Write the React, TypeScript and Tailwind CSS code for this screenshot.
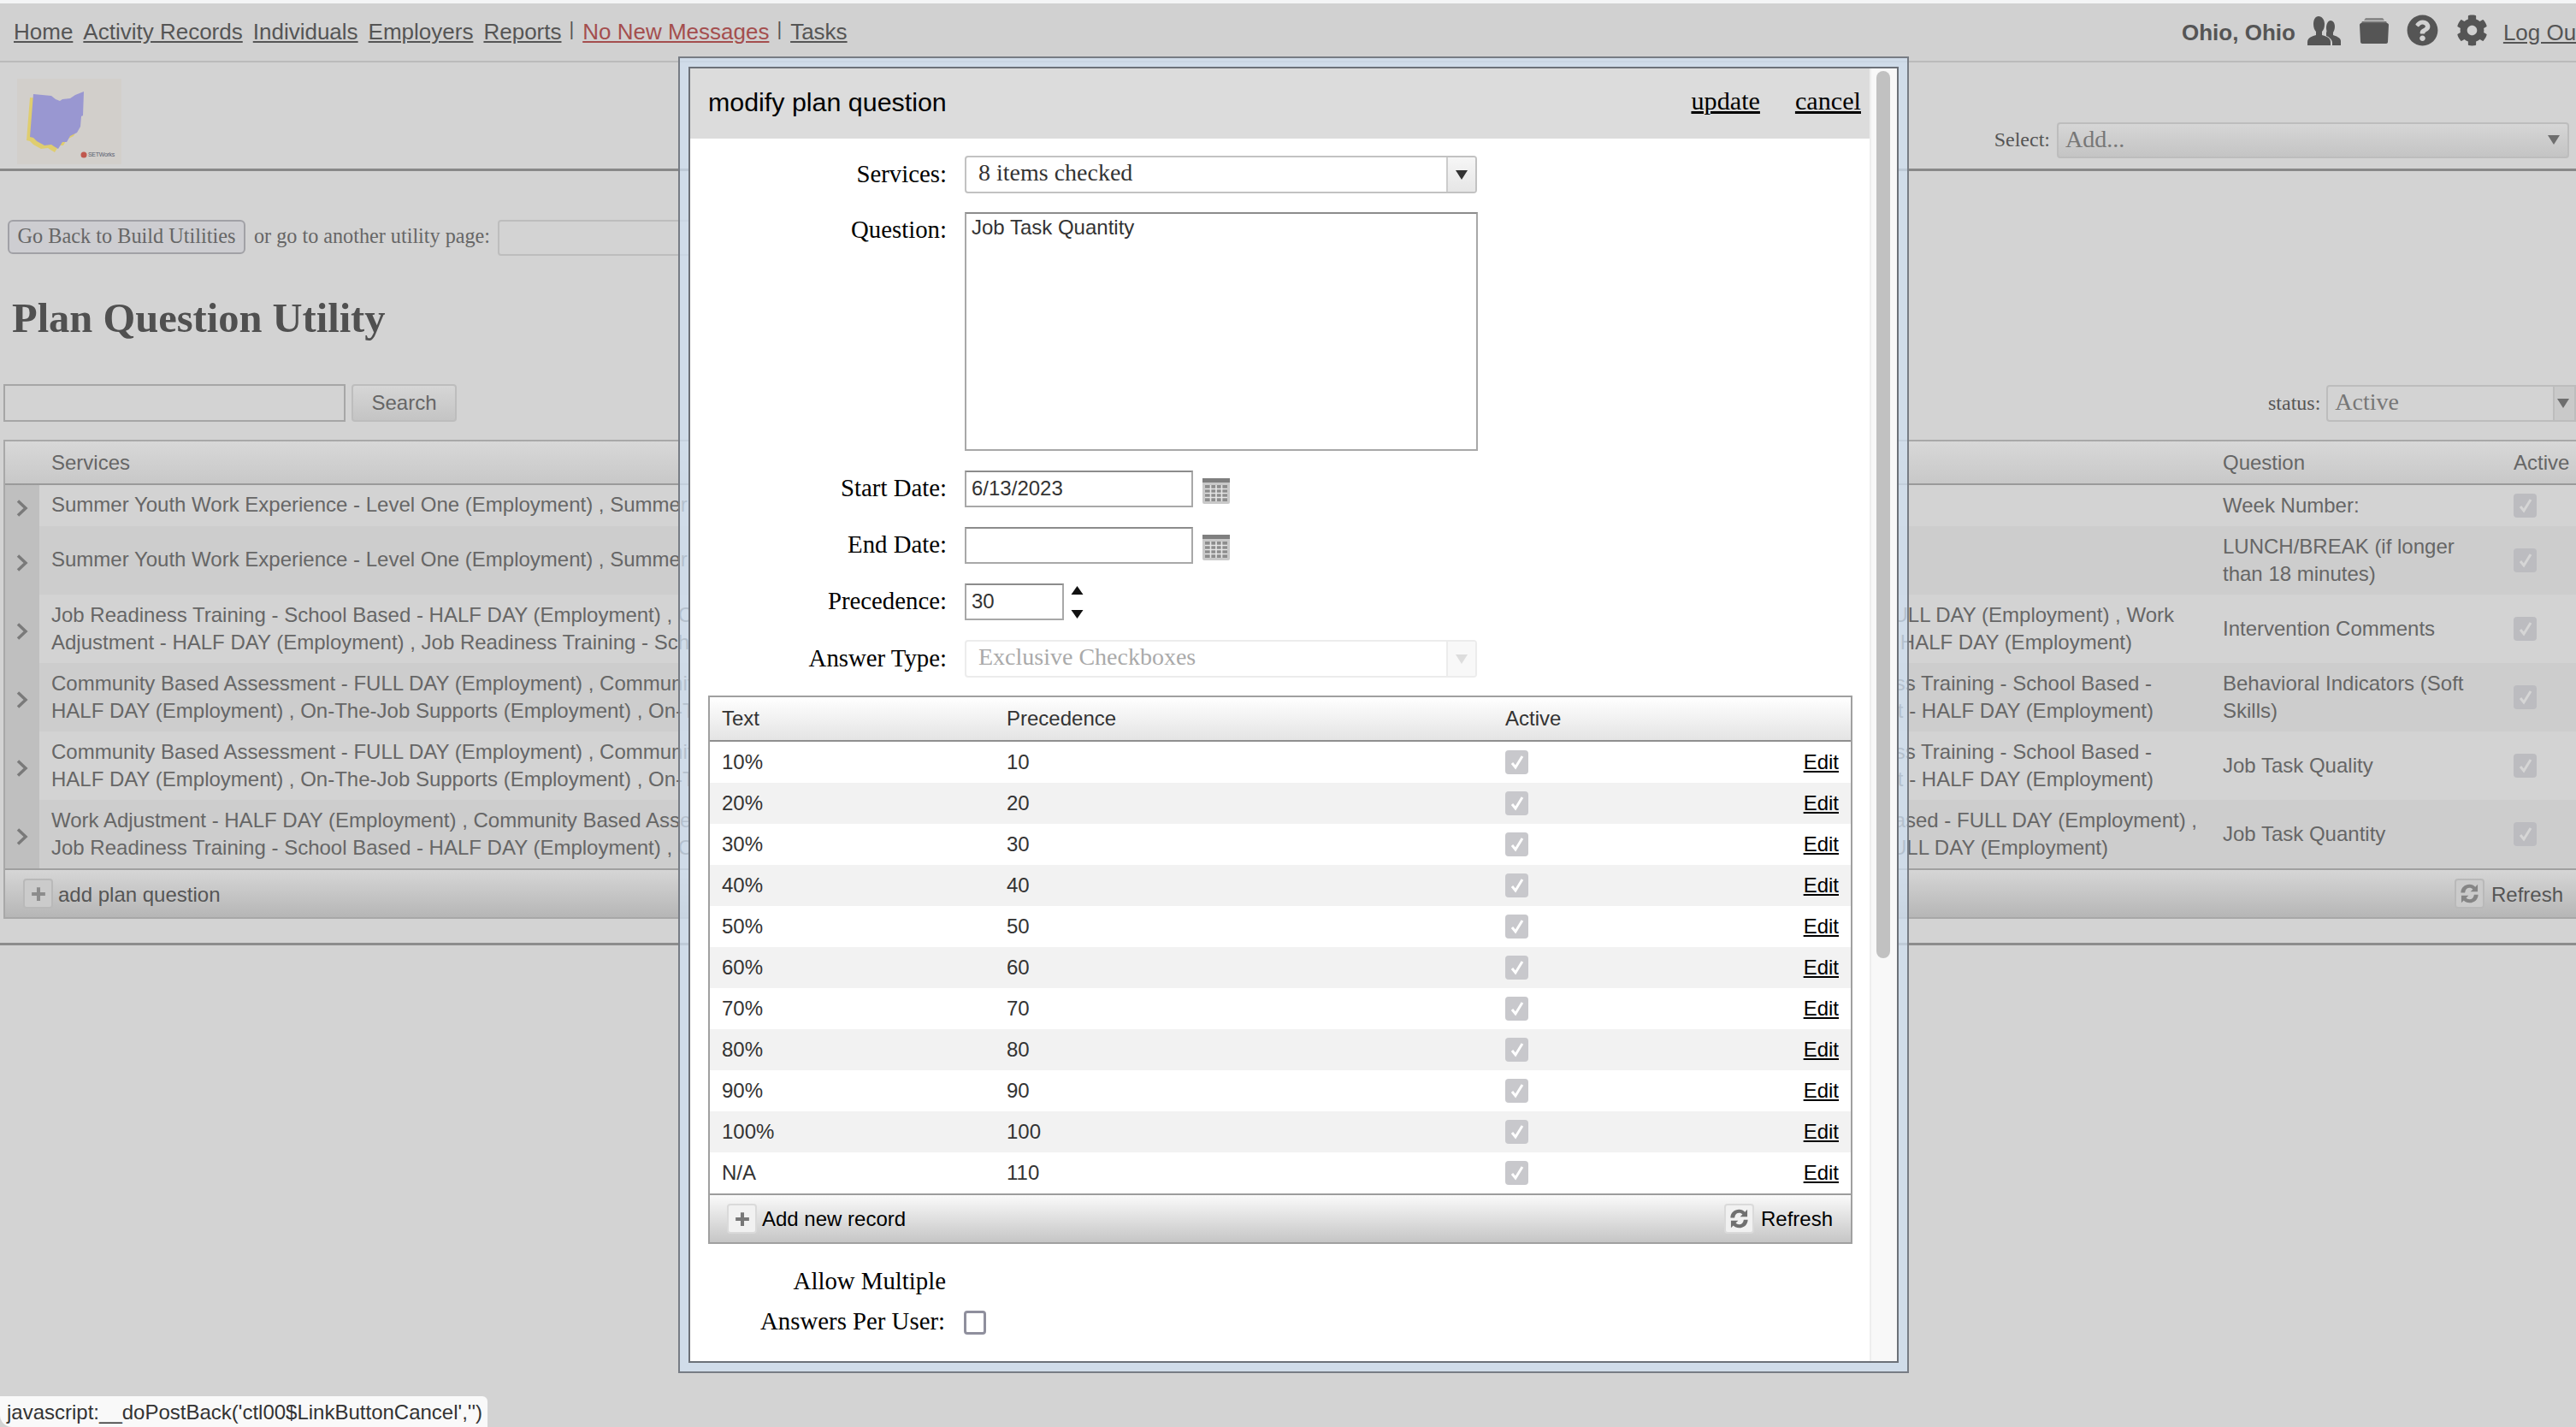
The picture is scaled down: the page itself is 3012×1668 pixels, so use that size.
import React from "react";
import { FaCog, FaQuestionCircle } from "react-icons/fa";

const serif = "font-['Liberation_Serif',serif]";

const rows = [
  {
    left: ["Summer Youth Work Experience - Level One (Employment) , Summer Youth Work Experience"],
    right: [],
    question: ["Week Number:"],
    h: "h-[48px]",
  },
  {
    left: ["Summer Youth Work Experience - Level One (Employment) , Summer Youth Work Experience"],
    right: [],
    question: ["LUNCH/BREAK (if longer", "than 18 minutes)"],
    h: "h-[80px]",
  },
  {
    left: [
      "Job Readiness Training - School Based - HALF DAY (Employment) , Community Based",
      "Adjustment - HALF DAY (Employment) , Job Readiness Training - School Based",
    ],
    right: [
      { t: "FULL DAY (Employment) , Work", pr: "pr-[57px]" },
      { t: "HALF DAY (Employment)", pr: "pr-[106px]" },
    ],
    question: ["Intervention Comments"],
    h: "h-[80px]",
  },
  {
    left: [
      "Community Based Assessment - FULL DAY (Employment) , Community Based",
      "HALF DAY (Employment) , On-The-Job Supports (Employment) , On-The-Job",
    ],
    right: [
      { t: "ess Training - School Based -", pr: "pr-[83px]" },
      { t: "nt - HALF DAY (Employment)", pr: "pr-[81px]" },
    ],
    question: ["Behavioral Indicators (Soft", "Skills)"],
    h: "h-[80px]",
  },
  {
    left: [
      "Community Based Assessment - FULL DAY (Employment) , Community Based",
      "HALF DAY (Employment) , On-The-Job Supports (Employment) , On-The-Job",
    ],
    right: [
      { t: "ess Training - School Based -", pr: "pr-[83px]" },
      { t: "nt - HALF DAY (Employment)", pr: "pr-[81px]" },
    ],
    question: ["Job Task Quality"],
    h: "h-[80px]",
  },
  {
    left: [
      "Work Adjustment - HALF DAY (Employment) , Community Based Assessment",
      "Job Readiness Training - School Based - HALF DAY (Employment) , Community",
    ],
    right: [
      { t: "Based - FULL DAY (Employment) ,", pr: "pr-[30px]" },
      { t: "FULL DAY (Employment)", pr: "pr-[134px]" },
    ],
    question: ["Job Task Quantity"],
    h: "h-[80px]",
  },
];

const answers = [
  ["10%", "10"],
  ["20%", "20"],
  ["30%", "30"],
  ["40%", "40"],
  ["50%", "50"],
  ["60%", "60"],
  ["70%", "70"],
  ["80%", "80"],
  ["90%", "90"],
  ["100%", "100"],
  ["N/A", "110"],
];

const UsersIcon = () => (
  <svg viewBox="0 0 40 36" className="w-[40px] h-[36px] text-[#555]" fill="currentColor">
    <path d="M27 6c3 0 5 3 5 7 0 3-1 5-2 7v3c3 1 9 3 9 7v5H29v-3c0-4-4-7-7-8v-4c1-1 0-3 0-5 0-5 2-9 5-9z" />
    <path d="M13 1c4 0 7 4 7 9 0 4-1 7-3 9v4c4 1 10 3 10 8v4H0v-4c0-5 6-7 10-8v-4c-2-2-3-5-3-9 0-5 2-9 6-9z" />
  </svg>
);

const FolderIcon = () => (
  <svg viewBox="0 0 36 32" className="w-[36px] h-[32px]">
    <path d="M8 1h20l2 3H6z" fill="#8a8a8a" />
    <path d="M4 5h28l2 4H2z" fill="#6e6e6e" />
    <path d="M1 9c0-1 1-2 2-2h30c1 0 2 1 2 2l-1 20c0 1-1 2-2 2H4c-1 0-2-1-2-2z" fill="#555" />
  </svg>
);

const PlusIcon = ({ color }: { color: string }) => (
  <svg viewBox="0 0 16 16" className="w-[18px] h-[18px]" fill={color}>
    <path d="M6.2 1h3.6v5.2H15v3.6H9.8V15H6.2V9.8H1V6.2h5.2z" />
  </svg>
);

const RefreshIcon = ({ color }: { color: string }) => (
  <svg viewBox="0 0 24 24" className="w-[27px] h-[27px]" fill={color}>
    <path d="M3 11C3 6 7 2.500 12 2.500c2.500 0 4.500 1 6 2.500L20.500 2.500V10h-7.500l2.500-2.500C14.500 6.500 13.500 6 12 6 9.500 6 7.800 7.500 7.200 11z" />
    <path d="M21 13c0 5-4 8.500-9 8.500-2.500 0-4.500-1-6-2.500L3.500 21.500V14H11l-2.500 2.500C9.500 17.500 10.500 18 12 18c2.500 0 4.200-1.500 4.800-5z" />
  </svg>
);

const IconButton = ({ light, children }: { light?: boolean; children: React.ReactNode }) => (
  <span
    className={`flex w-[35px] h-[35px] items-center justify-center rounded-[4px] border-2 ${
      light ? "border-[#dadada] bg-[#f1f1f1]" : "border-[#b9b9b9] bg-[#cbcbcb]"
    }`}
  >
    {children}
  </span>
);

const Checkbox = ({ light }: { light?: boolean }) => (
  <span
    className={`flex w-[27px] h-[28px] items-center justify-center rounded-[4px] ${
      light ? "bg-[#c8c8cc]" : "bg-[#bcbcc0]"
    }`}
  >
    <svg viewBox="0 0 20 20" className="w-[20px] h-[20px]" fill="none">
      <path
        d="M4 11l4 5 8-13"
        stroke={light ? "#ffffff" : "#d6d6d6"}
        strokeWidth="3"
      />
    </svg>
  </span>
);

const Caret = ({ color }: { color: string }) => (
  <svg viewBox="0 0 14 12" className="w-[14px] h-[12px]" fill={color}>
    <path d="M0 1h14L7 12z" />
  </svg>
);

const CalendarIcon = () => (
  <svg viewBox="0 0 32 30" className="w-[32px] h-[30px]">
    <rect x="0" y="0" width="32" height="30" rx="2" fill="#c9c9c9" />
    <rect x="0" y="0" width="32" height="5" fill="#7f7f7f" />
    <rect x="3" y="8" width="26" height="19" fill="#8d8d8d" />
    <path d="M3 12.500h26M3 17.500h26M3 22.500h26M9.500 8v19M16 8v19M22.500 8v19" stroke="#e6e6e6" strokeWidth="1.600" />
  </svg>
);

const FormRow = ({ label, mt, children }: { label: string; mt: string; children: React.ReactNode }) => (
  <div className={`flex items-center ${mt}`}>
    <div className={`w-[300px] shrink-0 pb-[3px] text-right text-[28.800px] leading-[40px] text-black ${serif}`}>{label}</div>
    <div className="ml-[21px] flex items-center">{children}</div>
  </div>
);

const App = () => {
  return (
    <div className="relative w-[3012px] h-[1668px] overflow-hidden bg-[#d3d3d3] font-['Liberation_Sans',Arial,sans-serif] text-[#666]">
      <div className="h-[4px] bg-[#f4f5f6]" />

      {/* Top nav */}
      <div className="flex h-[69px] items-start justify-between border-b-2 border-[#bbbbbb] bg-[#d1d1d1] pl-[16px] pt-[18px] text-[26px] leading-[30px] text-[#555]">
        <div className="flex items-start gap-[12px]">
          <span className="underline">Home</span>
          <span className="underline">Activity Records</span>
          <span className="underline">Individuals</span>
          <span className="underline">Employers</span>
          <span className="underline">Reports</span>
          <span className="-mt-[3px] -ml-[3px] text-[22px]">|</span>
          <span className="-ml-[2px] text-[#a44e4e] underline">No New Messages</span>
          <span className="-mt-[3px] -ml-[3px] text-[22px]">|</span>
          <span className="-ml-[2px] underline">Tasks</span>
        </div>
        <div className="-mt-[5px] flex w-[461px] shrink-0 items-center whitespace-nowrap">
          <span className="mt-[5px] font-bold">Ohio, Ohio</span>
          <span className="ml-[14px]"><UsersIcon /></span>
          <span className="ml-[20px]"><FolderIcon /></span>
          <span className="ml-[20px]"><FaQuestionCircle size={37} color="#555" /></span>
          <span className="ml-[21px]"><FaCog size={37} color="#555" /></span>
          <span className="ml-[18px] mt-[5px] underline">Log Out</span>
        </div>
      </div>

      {/* Logo and add select */}
      <div className="flex h-[127px] items-start justify-between border-b-[3px] border-[#888888] pl-[20px] pt-[19px]">
        <div className="relative h-[100px] w-[122px] bg-[#d2cfcb]">
          <svg viewBox="0 0 122 100" className="h-full w-full">
            <path
              d="M15 22l21 2 5 4 5 2 3-2 9-1 6-4 10-4-1 28-2 1-1 12-4 7-8 4-4 7h-5l-5 8-5-3-3-2-8 1-9-5-4-4-4-1z"
              fill="#dfcd6f"
            />
            <path
              d="M19 18l21 2 5 4 5 2 3-2 9-1 6-4 10-4-1 28-2 1-1 12-4 7-8 4-4 7h-5l-5 8-5-3-3-2-8 1-9-5-4-4-4-1z"
              fill="#9997d1"
            />
            <circle cx="78" cy="89" r="3.500" fill="#c0584e" />
          </svg>
          <span className="absolute left-[83px] top-[84px] text-[7px] leading-[10px] tracking-[-0.3px] text-[#5a6070]">SETWorks</span>
        </div>
        <div className={`mr-[8px] mt-[51px] flex items-center ${serif}`}>
          <span className="mr-[8px] pb-[2px] text-[24px] text-[#555]">Select:</span>
          <div className="flex h-[42px] w-[599px] items-center justify-between rounded-[4px] border-2 border-[#bdbdbd] bg-gradient-to-b from-[#d6d6d6] to-[#c4c4c4] pb-[2px] pl-[8px] pr-[9px] text-[28px] text-[#777]">
            <span>Add...</span>
            <Caret color="#6e6e6e" />
          </div>
        </div>
      </div>

      {/* Utility links */}
      <div className={`ml-[9px] mt-[57px] flex h-[42px] items-start ${serif}`}>
        <div className="flex h-[40px] w-[278px] items-center justify-center rounded-[6px] border-2 border-[#a1a1a6] bg-[#cdcdd1] pb-[2px] text-[24.300px] text-[#666]">
          Go Back to Build Utilities
        </div>
        <span className="ml-[10px] mt-[4px] text-[24.200px] leading-[30px] text-[#666]">or go to another utility page:</span>
        <div className="ml-[9px] h-[42px] w-[300px] rounded-[4px] border-2 border-[#bdbdbd]" />
      </div>

      <h1 className={`ml-[14px] mt-[45px] text-[48.500px] font-bold leading-[56px] text-[#505050] ${serif}`}>Plan Question Utility</h1>

      {/* Search and status */}
      <div className="mt-[49px] flex h-[44px] items-center justify-between pl-[4px]">
        <div className="flex items-center">
          <div className="h-[44px] w-[400px] border-2 border-[#a6a6a6]" />
          <div className="ml-[7px] flex h-[44px] w-[123px] items-center justify-center rounded-[4px] border-2 border-[#bdbdbd] bg-gradient-to-b from-[#d6d6d6] to-[#c4c4c4] text-[24px]">
            Search
          </div>
        </div>
        <div className={`flex w-[360px] shrink-0 items-center ${serif}`}>
          <span className="text-[24px] text-[#555]">status:</span>
          <div className="ml-[7px] flex h-[43px] flex-1 overflow-hidden rounded-l-[4px] border-2 border-[#bdbdbd]">
            <span className="w-[263px] pl-[8px] text-[28px] leading-[36px] text-[#777]">Active</span>
            <span className="flex flex-1 items-center justify-center border-l-2 border-[#bdbdbd] bg-[#c9c9c9] pr-[4px]">
              <Caret color="#6e6e6e" />
            </span>
          </div>
        </div>
      </div>

      {/* Plan question grid */}
      <div className="ml-[4px] mt-[21px] w-[3028px] border-2 border-[#a8a8a8] text-[24px] leading-[32px]">
        <div className="flex h-[51px] items-center border-b-2 border-[#9a9a9a] bg-gradient-to-b from-[#d8d8d8] to-[#c8c8c8]">
          <div className="w-[54px] shrink-0" />
          <div className="flex-1">Services</div>
          <div className="w-[340px] shrink-0">Question</div>
          <div className="w-[91px] shrink-0">Active</div>
        </div>
        {rows.map((row, i) => (
          <div key={i} className={`flex ${row.h} ${i % 2 === 1 ? "bg-[#cdcdcd]" : "bg-[#d3d3d3]"}`}>
            <div className="flex w-[40px] shrink-0 items-center justify-center bg-[#bfbfbf] pt-[6px]">
              <svg viewBox="0 0 14 20" className="w-[14px] h-[20px]" fill="none">
                <path d="M2 1.500l9 8.500-9 8.500" stroke="#7a7a7a" strokeWidth="3.500" />
              </svg>
            </div>
            <div className="flex min-w-0 flex-1 items-center">
              <div className="w-[780px] shrink-0 overflow-hidden whitespace-nowrap pl-[14px]">
                {row.left.map((line) => (
                  <div key={line} className={i < 2 ? "-mt-[2px]" : ""}>{line}</div>
                ))}
              </div>
              <div className="flex-1 overflow-hidden whitespace-nowrap text-right">
                {row.right.map((line) => (
                  <div key={line.t} className={line.pr}>{line.t}</div>
                ))}
              </div>
            </div>
            <div className="flex w-[340px] shrink-0 flex-col justify-center">
              {row.question.map((line) => (
                <div key={line}>{line}</div>
              ))}
            </div>
            <div className="flex w-[91px] shrink-0 items-center">
              <Checkbox />
            </div>
          </div>
        ))}
        <div className="flex h-[57px] items-center border-t-2 border-[#a0a0a0] bg-gradient-to-b from-[#d6d6d6] to-[#b6b6b6] pl-[21px]">
          <IconButton><PlusIcon color="#8c8c8c" /></IconButton>
          <span className="ml-[6px] mt-[3px] text-[#555]">add plan question</span>
          <div className="ml-auto mr-[33px] flex items-center">
            <IconButton><RefreshIcon color="#858585" /></IconButton>
            <span className="ml-[8px] mt-[3px] text-[#555]">Refresh</span>
          </div>
        </div>
      </div>

      <div className="mt-[28px] h-[3px] bg-[#8c8c8c]" />

      {/* Modal window */}
      <div className="absolute left-[793px] top-[66px] h-[1539px] w-[1439px] border-2 border-[#777c84] bg-[#cfdff0]/75 p-[10px]">
        <div className="flex h-full border-2 border-[#6c7178] bg-white">
          <div className="min-w-0 flex-1 overflow-hidden">
            <div className="flex h-[82px] items-center justify-between bg-[#dcdcdc] pl-[21px] pr-[10px]">
              <span className="pb-[2px] text-[30.400px] text-black">modify plan question</span>
              <div className={`flex gap-[41px] pb-[4px] text-[30.200px] text-black ${serif}`}>
                <span className="underline">update</span>
                <span className="underline">cancel</span>
              </div>
            </div>

            <FormRow label="Services:" mt="mt-[20px]">
              <div className="flex h-[44px] w-[599px] overflow-hidden rounded-[4px] border-2 border-[#c2c2c2]">
                <span className={`flex-1 pl-[14px] text-[28px] leading-[36px] text-[#333] ${serif}`}>8 items checked</span>
                <span className="flex w-[34px] items-center justify-center border-l-2 border-[#cccccc] bg-gradient-to-b from-[#f6f6f6] to-[#e6e6e6]">
                  <Caret color="#333333" />
                </span>
              </div>
            </FormRow>

            <div className="mt-[22px] flex items-start">
              <div className={`w-[300px] shrink-0 text-right text-[28.800px] leading-[40px] text-black ${serif}`}>Question:</div>
              <div className="ml-[21px] h-[279px] w-[600px] border-2 border-[#a8a8a8] border-t-[#8c8c8c] pl-[6px] pt-[1px] text-[24px] leading-[30px] text-[#333]">
                Job Task Quantity
              </div>
            </div>

            <FormRow label="Start Date:" mt="mt-[23px]">
              <div className="h-[43px] w-[267px] border-2 border-[#a8a8a8] border-t-[#8c8c8c] pl-[6px] text-[24px] leading-[38px] text-[#333]">6/13/2023</div>
              <span className="ml-[11px] mt-[4px]"><CalendarIcon /></span>
            </FormRow>

            <FormRow label="End Date:" mt="mt-[23px]">
              <div className="h-[43px] w-[267px] border-2 border-[#a8a8a8] border-t-[#8c8c8c]" />
              <span className="ml-[11px] mt-[4px]"><CalendarIcon /></span>
            </FormRow>

            <FormRow label="Precedence:" mt="mt-[23px]">
              <div className="h-[43px] w-[116px] border-2 border-[#a8a8a8] border-t-[#8c8c8c] pl-[6px] text-[24px] leading-[38px] text-[#333]">30</div>
              <div className="ml-[8px] flex h-[38px] flex-col justify-between">
                <svg viewBox="0 0 14 10" className="w-[15px] h-[10px]" fill="#111"><path d="M7 0l7 10H0z" /></svg>
                <svg viewBox="0 0 14 10" className="w-[15px] h-[10px]" fill="#111"><path d="M0 0h14L7 10z" /></svg>
              </div>
            </FormRow>

            <FormRow label="Answer Type:" mt="mt-[23px]">
              <div className="flex h-[44px] w-[599px] overflow-hidden rounded-[4px] border-2 border-[#ececec]">
                <span className={`flex-1 pl-[14px] text-[28px] leading-[36px] text-[#aaaaaa] ${serif}`}>Exclusive Checkboxes</span>
                <span className="flex w-[34px] items-center justify-center border-l-2 border-[#ececec] bg-[#f8f8f8]">
                  <Caret color="#dddddd" />
                </span>
              </div>
            </FormRow>

            {/* Answers table */}
            <div className="ml-[21px] mt-[21px] w-[1338px] border-2 border-[#a0a0a0] text-[24px] leading-[30px] text-[#333]">
              <div className="grid h-[52px] grid-cols-[347px_583px_1fr] items-center border-b-2 border-[#8f8f8f] bg-gradient-to-b from-white to-[#e4e4e4]">
                <span className="pl-[14px]">Text</span>
                <span>Precedence</span>
                <span>Active</span>
              </div>
              {answers.map(([text, prec], i) => (
                <div
                  key={text}
                  className={`grid h-[48px] grid-cols-[347px_583px_1fr_auto] items-center ${i % 2 === 1 ? "bg-[#f2f2f2]" : "bg-white"}`}
                >
                  <span className="pl-[14px]">{text}</span>
                  <span>{prec}</span>
                  <span className="flex"><Checkbox light /></span>
                  <span className="pr-[14px] text-black underline">Edit</span>
                </div>
              ))}
              <div className="flex h-[57px] items-center border-t-2 border-[#9c9c9c] bg-gradient-to-b from-[#fafafa] to-[#c6c6c6] pl-[20px] pr-[21px] text-black">
                <IconButton light><PlusIcon color="#777777" /></IconButton>
                <span className="ml-[6px] mt-[1px]">Add new record</span>
                <span className="ml-auto"><IconButton light><RefreshIcon color="#707070" /></IconButton></span>
                <span className="ml-[8px] mt-[1px]">Refresh</span>
              </div>
            </div>

            <div className={`mt-[24px] w-[299px] text-right text-[28.800px] leading-[38px] text-black ${serif}`}>Allow Multiple</div>
            <div className="mt-[9px] flex items-center">
              <div className={`w-[298px] shrink-0 text-right text-[28.800px] leading-[38px] text-black ${serif}`}>Answers Per User:</div>
              <span className="ml-[22px] mt-[3px] h-[28px] w-[26px] rounded-[4px] border-[3px] border-[#8f8f9d] bg-white" />
            </div>
          </div>

          {/* Modal scrollbar */}
          <div className="w-[32px] shrink-0 border-l-2 border-[#eeeeee] bg-[#f8f8f8] pl-[6px] pt-[3px]">
            <div className="h-[1037px] w-[16px] rounded-full bg-[#c1c1c1]" />
          </div>
        </div>
      </div>

      {/* Link preview */}
      <div className="absolute bottom-0 left-0 flex h-[36px] w-[570px] items-center rounded-tr-[6px] rounded-bl-[14px] bg-[#f9f9f9] pl-[8px] pt-[2px] text-[24px] text-[#333]">
        javascript:__doPostBack('ctl00$LinkButtonCancel','')
      </div>
    </div>
  );
};

export default App;
